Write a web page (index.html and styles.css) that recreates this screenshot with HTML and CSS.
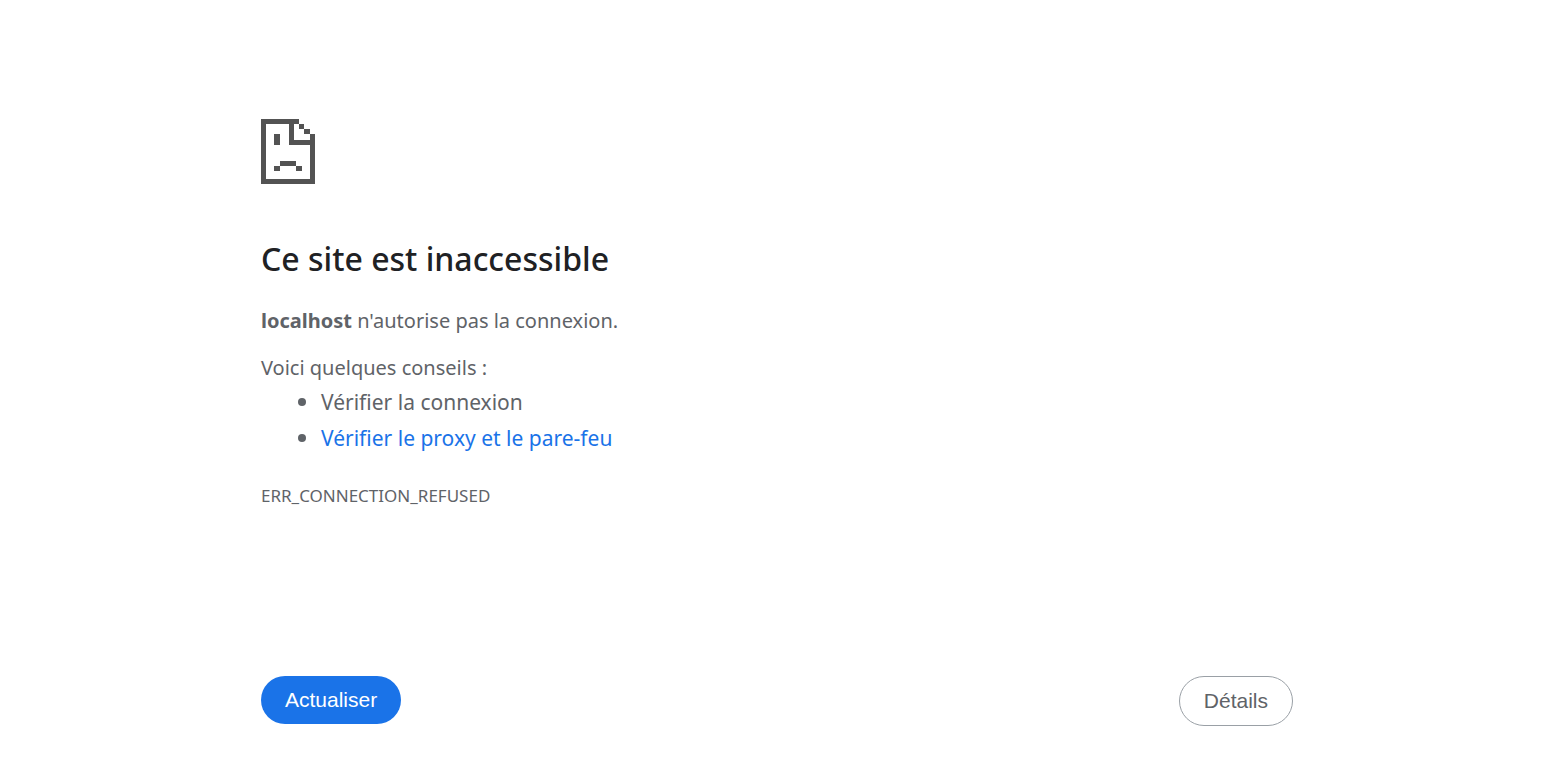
FILE: index.html
```html
<!DOCTYPE html>
<html lang="fr">
<head>
<meta charset="utf-8">
<meta name="viewport" content="width=device-width, initial-scale=1">
<title>localhost</title>
<link rel="stylesheet" href="styles.css">
</head>
<body>
<main class="error-page">
  <svg class="error-icon" viewBox="0 0 54 65" aria-hidden="true" shape-rendering="crispEdges">
    <path d="M0 0H38V5H33V21H49V15H54V65H0ZM5 5V60H49V26H28V5ZM38 5H43V10H38ZM43 10H49V15H43ZM13 15H19V26H13ZM19 42H35V47H19ZM13 47H19V52H13ZM35 47H41V52H35Z" fill="#535353" fill-rule="evenodd"/>
  </svg>
  <h1 class="title">Ce site est inaccessible</h1>
  <p class="summary"><strong>localhost</strong> n'autorise pas la connexion.</p>
  <p class="hint">Voici quelques conseils :</p>
  <ul class="suggestions">
    <li>Vérifier la connexion</li>
    <li><a class="link" href="#conseils">Vérifier le proxy et le pare-feu</a></li>
  </ul>
  <p class="error-code">ERR_CONNECTION_REFUSED</p>
  <div class="actions">
    <button class="button primary" type="button">Actualiser</button>
    <button class="button secondary" type="button">Détails</button>
  </div>
</main>
</body>
</html>
```
FILE: styles.css
```css
* {
  box-sizing: border-box;
}

body {
  margin: 0;
  background: #fff;
  color: #5f6368;
  font-family: "Segoe UI", "Noto Sans", sans-serif;
  font-size: 20px;
  line-height: 32px;
}

.error-page {
  max-width: 1080px;
  margin: 0 auto;
  padding: 119px 24px 32px;
}

.error-icon {
  display: block;
  width: 54px;
  height: 65px;
}

.title {
  margin: 54px 0 25px;
  color: #202124;
  font-size: 32px;
  font-weight: 500;
  line-height: 42px;
}

.summary {
  margin: 0 0 15px;
}

.hint {
  margin: 0;
}

.suggestions {
  margin: 0;
  padding-left: 60px;
  list-style: none;
  font-size: 21px;
  line-height: 36px;
}

.suggestions li {
  display: flex;
  align-items: center;
}

.suggestions li::before {
  content: "";
  width: 8px;
  height: 8px;
  margin: 0 15px 0 -23px;
  border-radius: 50%;
  background: #5f6368;
}

.link {
  color: #1a73e8;
  text-decoration: none;
}

.error-code {
  margin: 24px 0 0;
  font-size: 17px;
}

.actions {
  display: flex;
  justify-content: space-between;
  align-items: flex-start;
  margin-top: 164px;
}

.button {
  padding: 12px 24px;
  border: 0;
  border-radius: 25px;
  font-family: "Liberation Sans", Arial, sans-serif;
  font-size: 21px;
  line-height: 24px;
  cursor: pointer;
}

.primary {
  background: #1a73e8;
  color: #fff;
}

.secondary {
  border: 1px solid #9aa0a6;
  background: #fff;
  color: #5f6368;
}
```
